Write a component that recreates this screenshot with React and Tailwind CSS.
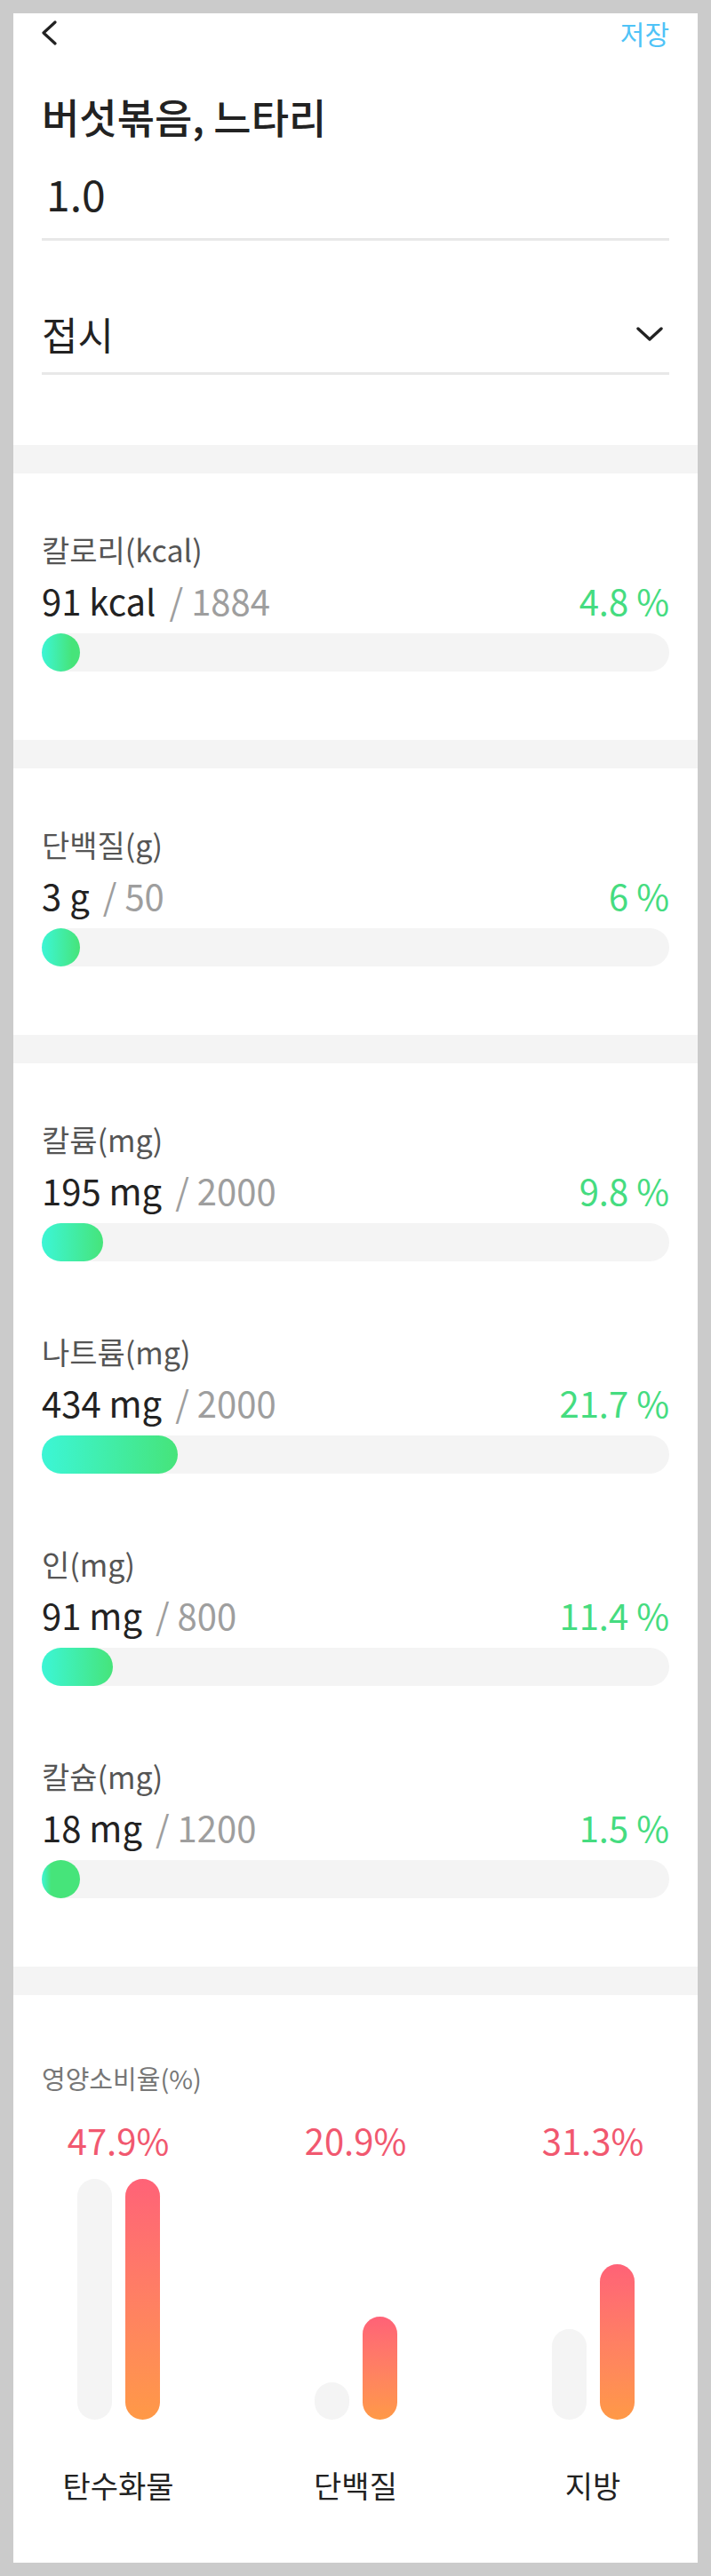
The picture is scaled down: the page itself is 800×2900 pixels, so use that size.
import React from 'react'

const TRACK = 706

const groups = [
  [{ label: '칼로리(kcal)', value: '91 kcal', max: '1884', pct: 4.8 }],
  [{ label: '단백질(g)', value: '3 g', max: '50', pct: 6 }],
  [
    { label: '칼륨(mg)', value: '195 mg', max: '2000', pct: 9.8 },
    { label: '나트륨(mg)', value: '434 mg', max: '2000', pct: 21.7 },
    { label: '인(mg)', value: '91 mg', max: '800', pct: 11.4 },
    { label: '칼슘(mg)', value: '18 mg', max: '1200', pct: 1.5 },
  ],
]

const ratios = [
  { name: '탄수화물', pct: '47.9%', ref: 271, val: 271 },
  { name: '단백질', pct: '20.9%', ref: 42, val: 116 },
  { name: '지방', pct: '31.3%', ref: 102, val: 175 },
]

function Band() {
  return <div className="h-[32px] bg-[#f4f4f4]" />
}

function NutrientRow({ label, value, max, pct }) {
  const px = (pct / 100) * TRACK
  const w = Math.max(px, 43)
  return (
    <div>
      <p className="text-[34px] leading-[34px] text-[#555]">{label}</p>
      <div className="mt-[20px] flex items-center justify-between text-[40px] leading-[40px]">
        <p>
          <span className="text-[#222]">{value}</span>
          <span className="ml-[15px] text-[#9e9e9e]">/ {max}</span>
        </p>
        <p className="text-[#45dc80]">{pct} %</p>
      </div>
      <div className="mt-[17px] h-[43px] rounded-full bg-[#f4f4f4]">
        <div
          className="h-full rounded-full"
          style={{ width: w, background: `linear-gradient(90deg, #3cf6d6 0px, #46e47a ${px}px)` }}
        />
      </div>
    </div>
  )
}

function Chevron({ down }) {
  if (down) {
    return (
      <svg width="30" height="18" viewBox="0 0 30 18" className="mr-[7px]">
        <polyline points="2,3 15,15 28,3" fill="none" stroke="#222" strokeWidth="3.4" strokeLinecap="round" strokeLinejoin="round" />
      </svg>
    )
  }
  return (
    <svg width="18" height="30" viewBox="0 0 18 30">
      <polyline points="15,3 2,15 15,27" fill="none" stroke="#222" strokeWidth="3.2" strokeLinecap="round" strokeLinejoin="round" />
    </svg>
  )
}

export default function App() {
  return (
    <div className="min-h-[2900px] bg-[#cbcbcb] px-[15px] pt-[15px] pb-[16px] font-['Noto_Sans_CJK_KR','Noto_Sans',sans-serif]">
      <div className="bg-white">
        <div className="px-[32px] pb-[79px]">
          <header className="flex h-[44px] items-center justify-between">
            <Chevron />
            <button type="button" className="text-[30px] leading-[30px] text-[#4fc3f7]">저장</button>
          </header>
          <h1 className="mt-[48px] text-[46px] leading-[46px] font-medium text-[#222]">버섯볶음, 느타리</h1>
          <div className="mt-[40px] border-b-[3px] border-[#e8e8e8] pb-[27px] pl-[5px] text-[48px] leading-[48px] text-[#222]">
            1.0
          </div>
          <div className="mt-[83px] flex items-center justify-between border-b-[3px] border-[#e8e8e8] pb-[21px]">
            <span className="text-[44px] leading-[44px] text-[#222]">접시</span>
            <Chevron down />
          </div>
        </div>

        {groups.map((rows, i) => (
          <React.Fragment key={i}>
            <Band />
            <div className="flex flex-col gap-[85px] px-[32px] pt-[69px] pb-[77px]">
              {rows.map((r) => (
                <NutrientRow key={r.label} {...r} />
              ))}
            </div>
          </React.Fragment>
        ))}

        <Band />
        <div className="px-[32px] pt-[79px] pb-[70px]">
          <p className="text-[29px] leading-[28px] text-[#777]">영양소비율(%)</p>
          <div className="mt-[36px] flex justify-between">
            {ratios.map((r) => (
              <div key={r.name} className="flex w-[172px] flex-col items-center">
                <p className="text-[40px] leading-[40px] text-[#f1586f]">{r.pct}</p>
                <div className="mt-[24px] flex h-[271px] items-end gap-[15px]">
                  <div className="w-[39px] rounded-full bg-[#f4f4f4]" style={{ height: r.ref }} />
                  <div className="w-[39px] rounded-full bg-linear-to-b from-[#ff6277] to-[#ff9946]" style={{ height: r.val }} />
                </div>
                <p className="mt-[57px] text-[34px] leading-[34px] text-[#222]">{r.name}</p>
              </div>
            ))}
          </div>
        </div>
      </div>
    </div>
  )
}
